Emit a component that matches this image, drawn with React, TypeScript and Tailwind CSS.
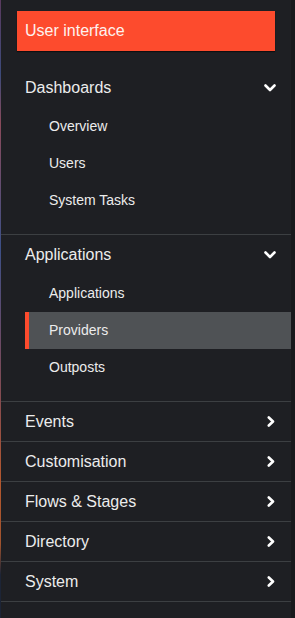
import React from 'react';

const font = { fontFamily: '"Liberation Sans", Arial, sans-serif' };

const ChevronDown = () => (
  <svg width="12" height="8" viewBox="0 0 12 8" className="shrink-0">
    <path d="M1.5 1.5 L6 6 L10.5 1.5" fill="none" stroke="#ffffff" strokeWidth="2.6" strokeLinecap="round" strokeLinejoin="round" />
  </svg>
);

const ChevronRight = () => (
  <svg width="8" height="11" viewBox="0 0 8 11" className="shrink-0">
    <path d="M1.8 1.5 L6 5.5 L1.8 9.5" fill="none" stroke="#ffffff" strokeWidth="2.6" strokeLinecap="round" strokeLinejoin="round" />
  </svg>
);

interface SectionProps {
  title: string;
  items: string[];
  active?: string;
}

const ExpandedSection: React.FC<SectionProps> = ({ title, items, active }) => (
  <div className="border-b border-[#3c3f42] pb-[15px]">
    <div className="flex h-10 items-center justify-between pl-6 pr-[15px] text-[16px] text-[#ececec]">
      <span>{title}</span>
      <ChevronDown />
    </div>
    {items.map((item) =>
      item === active ? (
        <div key={item} className="ml-6 flex h-[37px] items-center border-l-4 border-[#fd4b2d] bg-[#4f5255] pl-5 text-[14px] text-[#ececec]">
          {item}
        </div>
      ) : (
        <div key={item} className="flex h-[37px] items-center pl-12 text-[14px] text-[#ececec]">
          {item}
        </div>
      )
    )}
  </div>
);

const CollapsedRow: React.FC<{ title: string }> = ({ title }) => (
  <div className="flex h-10 items-center justify-between border-b border-[#3c3f42] pl-6 pr-[16px] text-[16px] text-[#ececec]">
    <span>{title}</span>
    <ChevronRight />
  </div>
);

export default function App() {
  return (
    <div className="flex h-[618px] w-[295px] overflow-hidden bg-[#1e1f23]" style={font}>
      <div className="w-px bg-[linear-gradient(to_bottom,#5a3a5e_0%,#3c4a7a_12%,#8a4a5a_20%,#3c4f86_40%,#6a4a66_55%,#8a4c4c_66%,#b4582e_78%,#a0532e_88%,#1c2436_93%,#1c2436_100%)]" />
      <nav className="flex w-[290px] flex-col">
        <div className="mx-4 mt-[11px] flex h-10 items-center bg-[#fd4b2d] pl-2 text-[16px] text-[#fdf2ef] shadow-[0_1px_1px_rgba(0,0,0,0.5)]">
          User interface
        </div>
        <div className="h-[17px]" />
        <ExpandedSection title="Dashboards" items={['Overview', 'Users', 'System Tasks']} />
        <ExpandedSection title="Applications" items={['Applications', 'Providers', 'Outposts']} active="Providers" />
        <CollapsedRow title="Events" />
        <CollapsedRow title="Customisation" />
        <CollapsedRow title="Flows & Stages" />
        <CollapsedRow title="Directory" />
        <CollapsedRow title="System" />
      </nav>
      <div className="w-1 bg-[#18191c]" />
    </div>
  );
}
